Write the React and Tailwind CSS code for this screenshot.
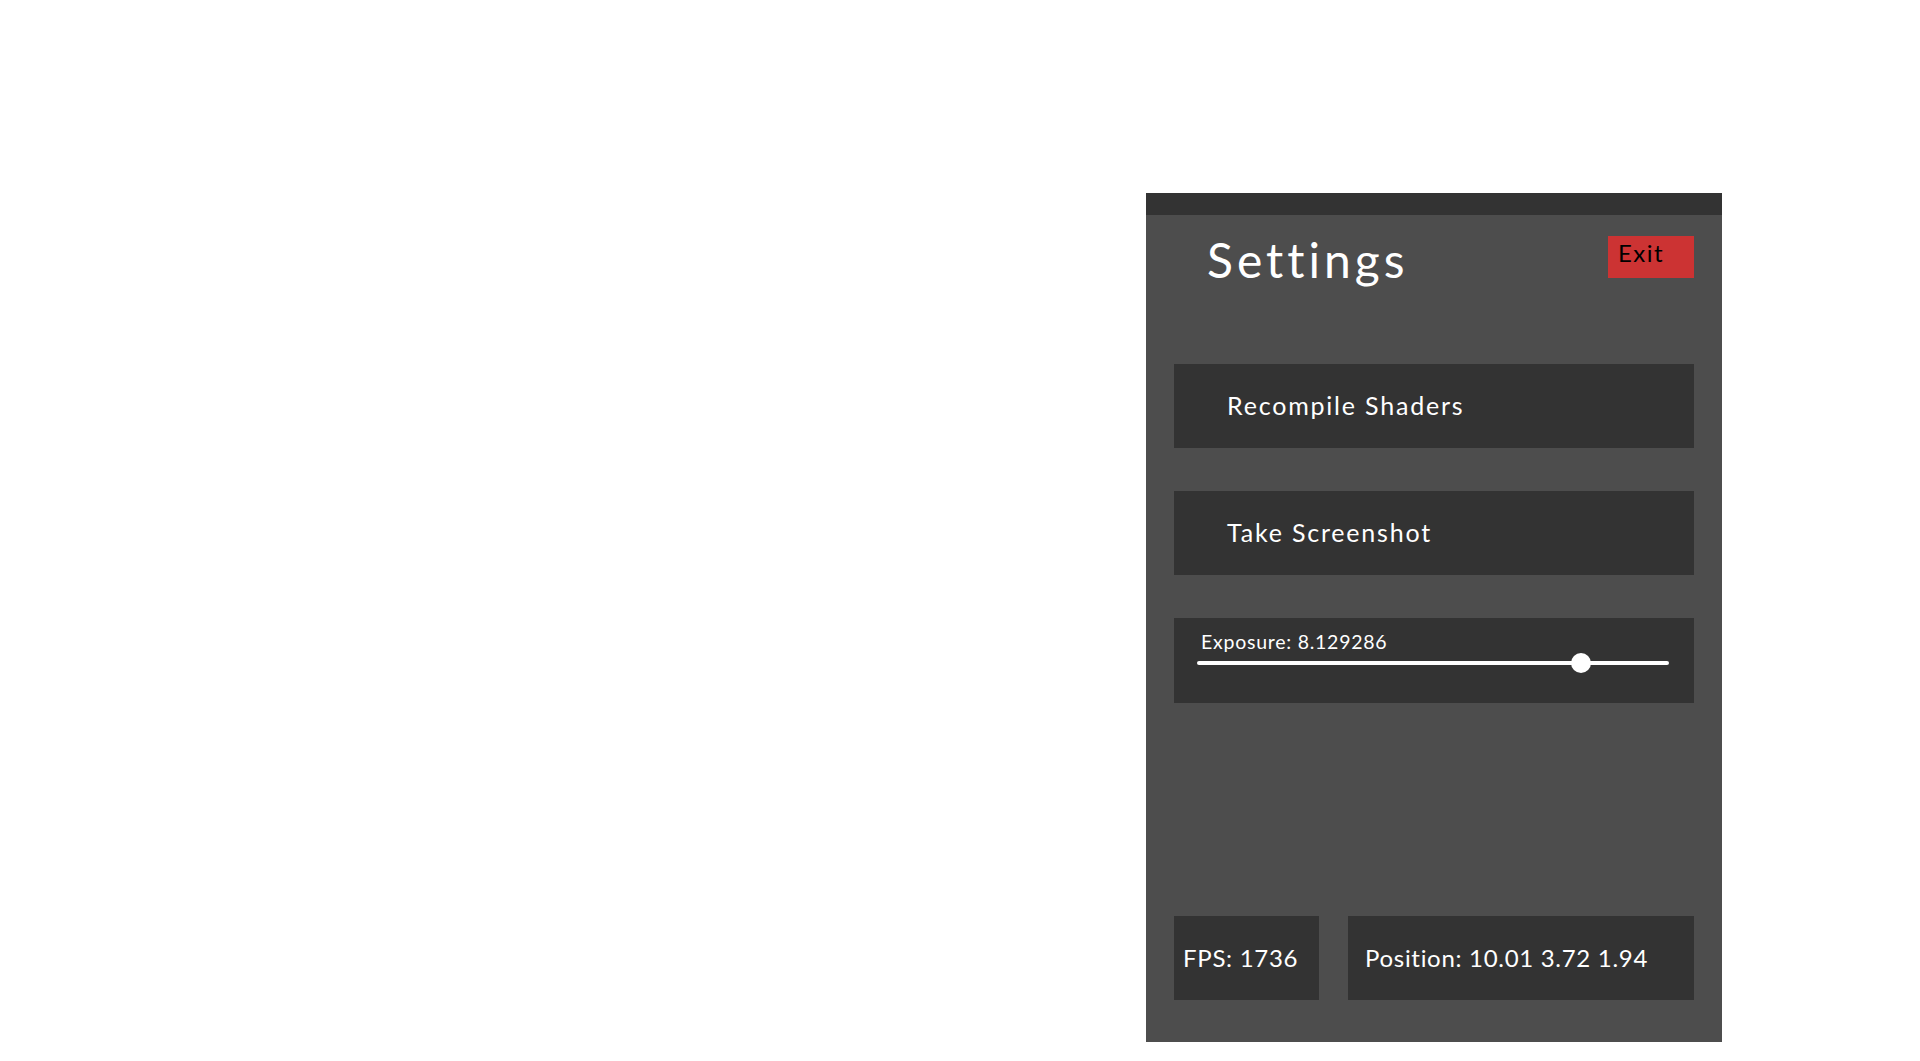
import { useState } from "react";

const ACTIONS = ["Recompile Shaders", "Take Screenshot"];

const ExposureSlider = ({ value, min = 0, max = 10 }) => {
  const pct = ((value - min) / (max - min)) * 100;
  return (
    <div className="relative h-5 w-[472px]">
      <div className="absolute left-0 right-0 top-[8px] h-[4px] rounded-full bg-white" />
      <div
        className="absolute top-0 h-5 w-5 -translate-x-1/2 rounded-full bg-white"
        style={{ left: `${pct}%` }}
      />
    </div>
  );
};

export default function App() {
  const [exposure] = useState(8.129286);

  return (
    <div className="min-h-screen bg-white pt-[193px] pl-[1146px] font-['Lato','Noto_Sans',sans-serif]">
      <div className="flex h-[849px] w-[576px] flex-col bg-[#4d4d4d] px-[28px] pb-[42px]">
        {/* ── Title bar ── */}
        <div className="-mx-[28px] h-[22px] bg-[#333333]" />

        {/* ── Header ── */}
        <div className="flex h-[149px] items-start justify-between pt-[21px]">
          <h1 className="ml-[33px] text-[48px] leading-none tracking-[4px] text-white">Settings</h1>
          <button className="flex h-[42px] w-[86px] items-start bg-[#cc3333] pl-[10px] pt-[5px] text-[24px] leading-none tracking-[1.5px] text-black">
            Exit
          </button>
        </div>

        {/* ── Actions ── */}
        <div className="flex flex-col gap-[43px]">
          {ACTIONS.map((label) => (
            <button
              key={label}
              className="flex h-[84px] items-center bg-[#333333] pl-[53px] text-left text-[25px] tracking-[1.8px] text-white"
            >
              {label}
            </button>
          ))}

          <div className="h-[85px] bg-[#333333] pl-[23px] pt-[12px]">
            <p className="pl-[4px] text-[19.5px] leading-[1.2] tracking-[0.75px] text-white">
              Exposure: {exposure}
            </p>
            <ExposureSlider value={exposure} />
          </div>
        </div>

        <div className="flex-1" />

        {/* ── Stats ── */}
        <div className="flex gap-[29px]">
          <div className="flex h-[84px] w-[145px] items-center bg-[#333333] pl-[9px] text-[24px] tracking-[0.7px] text-white">
            FPS: 1736
          </div>
          <div className="flex h-[84px] flex-1 items-center bg-[#333333] pl-[17px] text-[24px] tracking-[0.7px] text-white">
            Position: 10.01 3.72 1.94
          </div>
        </div>
      </div>
    </div>
  );
}
